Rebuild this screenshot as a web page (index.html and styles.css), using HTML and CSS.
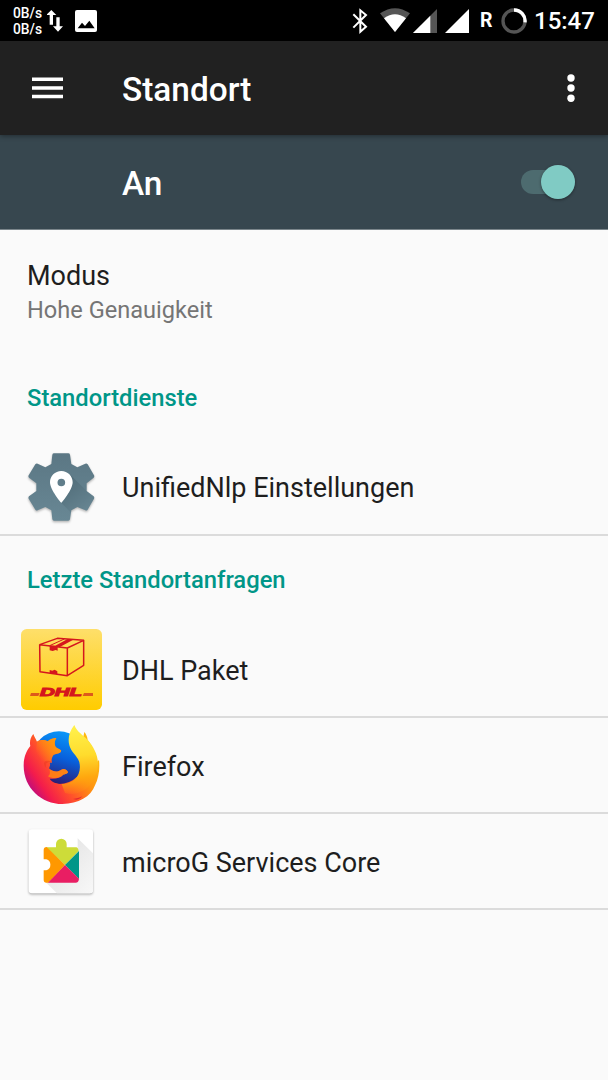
FILE: index.html
```html
<!DOCTYPE html>
<html lang="de">
<head>
    <meta charset="UTF-8">
    <meta name="viewport" content="width=device-width, initial-scale=1.0">
    <title>Standort</title>
    <link rel="stylesheet" href="styles.css">
</head>
<body>

    <!-- Statusleiste -->
    <div class="statusbar">
        <div class="speed">
            <span>0B/s</span>
            <span>0B/s</span>
        </div>
        <svg class="arrows" width="16" height="22" viewBox="0 0 48 66">
            <path fill="#fff" d="M13 0 28 15H18V44H8V15H-2zM33 65 18 49H28V22H38V49H48z"/>
        </svg>
        <svg class="picture" width="22" height="22" viewBox="0 0 66 66">
            <rect width="66" height="66" rx="6" fill="#fff"/>
            <path d="M8 55 21 38 30 48 43 32 59 55z"/>
        </svg>
        <div class="status-right">
            <svg class="bluetooth" width="16" height="26" viewBox="0 0 48 78">
                <path fill="none" stroke="#fff" stroke-width="6" d="M4 19 42 56 25 71V7L42 21 4 59"/>
            </svg>
            <svg class="wifi" width="30" height="25" viewBox="0 0 90 75">
                <path fill="#555" d="M0 16Q45-15 90 16L45 72z"/>
                <path fill="#fff" d="M12 31Q45 6 78 31L45 72z"/>
            </svg>
            <svg class="signal" width="24" height="24" viewBox="0 0 72 72">
                <path fill="#555" d="M72 0V72H0z"/>
                <path fill="#fff" d="M52 20V72H0z"/>
            </svg>
            <svg class="signal-full" width="24" height="24" viewBox="0 0 72 72">
                <path fill="#fff" d="M72 0V72H0z"/>
            </svg>
            <span class="roaming">R</span>
            <svg class="battery" width="26" height="26" viewBox="0 0 78 78">
                <circle cx="39" cy="39" r="33" fill="none" stroke="#555" stroke-width="10"/>
                <path fill="none" stroke="#fff" stroke-width="10" d="M39 6A33 33 0 0 1 72 43"/>
            </svg>
            <span class="clock">15:47</span>
        </div>
    </div>

    <!-- Titelleiste -->
    <div class="toolbar">
        <svg class="menu" width="31" height="22" viewBox="0 0 31 22">
            <path fill="#fff" d="M0 .5H31V4H0zM0 9.2H31V12.7H0zM0 17.8H31V21.3H0z"/>
        </svg>
        <h1>Standort</h1>
        <svg class="more" width="8" height="28" viewBox="0 0 8 28">
            <circle cx="4" cy="4" r="3.7" fill="#fff"/>
            <circle cx="4" cy="14" r="3.7" fill="#fff"/>
            <circle cx="4" cy="24.3" r="3.7" fill="#fff"/>
        </svg>
    </div>

    <!-- Schalter -->
    <div class="switchbar">
        <span>An</span>
        <div class="switch"><div class="thumb"></div></div>
    </div>

    <!-- Einstellungen -->
    <div class="mode">
        <div class="mode-title">Modus</div>
        <div class="mode-value">Hohe Genauigkeit</div>
    </div>

    <h2>Standortdienste</h2>

    <div class="row service">
        <svg class="app-icon" viewBox="0 0 285 288">
            <defs>
                <linearGradient id="gear" x1="0" y1="0" x2="0" y2="1">
                    <stop offset="0" stop-color="#5b7784"/>
                    <stop offset="1" stop-color="#688794"/>
                </linearGradient>
                <linearGradient id="gear-shade" gradientUnits="userSpaceOnUse" x1="150" y1="130" x2="220" y2="200">
                    <stop offset="0" stop-color="#4d6975" stop-opacity=".7"/>
                    <stop offset="1" stop-color="#4d6975" stop-opacity="0"/>
                </linearGradient>
                <clipPath id="gear-clip">
                    <path d="M117 40H160Q164 40 165 44L169 72 187 82 211 71Q215 69 218 73L237 106Q239 110 236 113L215 130V153L236 169Q239 172 237 176L218 209Q215 213 211 211L187 201 169 211 165 238Q164 242 160 242H117Q113 242 112 238L109 211 91 201 68 211Q64 213 61 209L41 176Q39 172 42 169L64 153V130L42 113Q39 110 41 106L61 73Q64 69 68 71L91 82 109 72 112 44Q113 40 117 40z"/>
                </clipPath>
            </defs>
            <path class="shadow" fill="url(#gear)" d="M117 40H160Q164 40 165 44L169 72 187 82 211 71Q215 69 218 73L237 106Q239 110 236 113L215 130V153L236 169Q239 172 237 176L218 209Q215 213 211 211L187 201 169 211 165 238Q164 242 160 242H117Q113 242 112 238L109 211 91 201 68 211Q64 213 61 209L41 176Q39 172 42 169L64 153V130L42 113Q39 110 41 106L61 73Q64 69 68 71L91 82 109 72 112 44Q113 40 117 40z"/>
            <path clip-path="url(#gear-clip)" fill="url(#gear-shade)" d="M166 104 260 198V288H238L139 189z"/>
            <path fill="#fff" fill-rule="evenodd" d="M139 93C120 93 105 108 105 127 105 150 139 189 139 189S173 150 173 127C173 108 158 93 139 93zM139 116A11.500 11.500 0 1 1 139 139 11.500 11.500 0 1 1 139 116z"/>
        </svg>
        <span>UnifiedNlp Einstellungen</span>
    </div>

    <h2>Letzte Standortanfragen</h2>

    <div class="row">
        <svg class="app-icon" viewBox="0 6 285 288">
            <defs>
                <linearGradient id="dhl" x1="0" y1="0" x2="0" y2="1">
                    <stop offset="0" stop-color="#fedf6a"/>
                    <stop offset="1" stop-color="#fc0"/>
                </linearGradient>
            </defs>
            <rect x="18" y="27" width="243" height="243" rx="17" fill="url(#dhl)"/>
            <g fill="none" stroke="#d5161d" stroke-width="4.500" stroke-linejoin="round">
                <path d="M74 74 157 84V167L75 155zM157 84 206 61V136L157 167M74 74 127 55 206 61"/>
            </g>
            <path fill="#d5161d" d="M118 79 158 57 175 59 133 82zM104 77H128V92L122 90 113 93 104 91zM104 150 112 152 119 149 127 154V163L104 159z"/>
            <path fill="none" stroke="#d5161d" stroke-width="3" d="M104 77 148 57"/>
            <path fill="#dd5a1b" d="M48 219H74L70 228H45zM207 219H234V228H203z"/>
            <text class="dhl-text" x="75" y="227" textLength="126" lengthAdjust="spacingAndGlyphs">DHL</text>
        </svg>
        <span>DHL Paket</span>
    </div>

    <div class="row">
        <svg class="app-icon" viewBox="0 0 285 288">
            <defs>
                <linearGradient id="fox" gradientUnits="userSpaceOnUse" x1="215" y1="80" x2="40" y2="200">
                    <stop offset="0" stop-color="#ffb80f"/>
                    <stop offset=".3" stop-color="#ff9210"/>
                    <stop offset=".62" stop-color="#ff4a2e"/>
                    <stop offset=".85" stop-color="#f31c4c"/>
                    <stop offset="1" stop-color="#c50e78"/>
                </linearGradient>
                <linearGradient id="globe" x1=".7" y1="0" x2=".4" y2="1">
                    <stop offset="0" stop-color="#0a9bfa"/>
                    <stop offset=".5" stop-color="#0860dc"/>
                    <stop offset="1" stop-color="#30196f"/>
                </linearGradient>
                <linearGradient id="tail" gradientUnits="userSpaceOnUse" x1="185" y1="30" x2="205" y2="235">
                    <stop offset="0" stop-color="#fff04a"/>
                    <stop offset=".4" stop-color="#ffdc2d"/>
                    <stop offset=".72" stop-color="#ffa80f"/>
                    <stop offset="1" stop-color="#ff8c12" stop-opacity="0"/>
                </linearGradient>
                <linearGradient id="snout" gradientUnits="userSpaceOnUse" x1="130" y1="75" x2="70" y2="115">
                    <stop offset="0" stop-color="#ff980e"/>
                    <stop offset="1" stop-color="#ff980e" stop-opacity="0"/>
                </linearGradient>
            </defs>
            <path fill="url(#fox)" d="M55 48C46 58 43 72 46 84 32 100 26 122 26 143 26 210 80 258 142 258 190 258 228 236 240 202 251 180 255 152 252 126L246 132C243 102 228 80 218 66 217 56 213 48 208 42L200 80 140 60 66 71C62 62 58 56 55 48z"/>
            <circle cx="132" cy="119" r="79" fill="url(#globe)"/>
            <path fill="url(#fox)" d="M66 71C78 64 90 66 98 70 106 63 116 60 124 60 119 68 117 78 122 87 127 92 134 93 138 97 140 103 133 106 116 110 110 116 109 124 111 134L104 134C108 142 102 146 103 152 115 162 128 163 139 155 148 150 157 157 159 163 155 170 148 168 144 171 136 180 122 184 104 182 110 192 125 198 142 198L130 225 80 215 40 180 34 120z"/>
            <path fill="url(#snout)" d="M66 71C78 64 90 66 98 70 106 63 116 60 124 60 119 68 117 78 122 87 127 92 134 93 138 97 140 103 133 106 116 110L104 134 60 120z"/>
            <path fill="#ff8a10" opacity=".8" d="M103 152C115 162 128 163 139 155 148 150 157 157 159 163 155 170 148 168 144 171 132 182 112 183 98 174 106 172 106 162 103 152z"/>
            <path fill="#e93a22" opacity=".5" d="M111 131C94 130 90 138 94 150 80 136 88 122 111 131z"/>
            <path fill="url(#tail)" d="M178 21C162 42 158 62 163 82 168 102 185 112 192 130 199 150 192 172 180 184 168 195 152 199 140 198L150 225C205 240 250 190 249 135 248 108 234 84 218 66 203 50 186 42 178 21z"/>
            <path fill="#e5272f" d="M174 243C184 242 194 240 202 235 197 241 192 244 184 245z"/>
        </svg>
        <span>Firefox</span>
    </div>

    <div class="row">
        <svg class="app-icon" viewBox="0 -3 285 288">
            <defs>
                <linearGradient id="long-shadow" x1="0" y1="0" x2="1" y2="1">
                    <stop offset=".3" stop-color="#e6e6e6"/>
                    <stop offset="1" stop-color="#f8f8f8"/>
                </linearGradient>
            </defs>
            <rect class="shadow" x="41" y="43" width="193" height="192" rx="10" fill="#fff"/>
            <path fill="url(#long-shadow)" d="M188 70 234 115V226Q234 235 224 235H126L89 199 188 100z"/>
            <path fill="#cddc39" d="M93 97H123V87A16 16 0 0 1 155 87V97H184Q189 97 191 108L150 150z"/>
            <path fill="#ff9800" d="M95 96 150 150 100 203H94Q86 203 86 194V166H94A16 17 0 0 0 94 133H86V105Q86 96 95 96z"/>
            <path fill="#009688" d="M192 108V192L150 150z"/>
            <path fill="#e91e63" d="M150 150 192 191Q191 203 182 203H99z"/>
        </svg>
        <span>microG Services Core</span>
    </div>

</body>
</html>
```

FILE: styles.css
```css
* {
    box-sizing: border-box;
}

body {
    margin: 0;
    min-height: 100vh;
    background-color: #fafafa;
    color: #1e1e1e;
    font-family: Roboto, sans-serif;
    font-size: 27px;
}

svg {
    display: block;
    flex-shrink: 0;
}

h1, h2 {
    margin: 0;
    font-weight: 500;
}

/* Statusleiste */
.statusbar {
    display: flex;
    align-items: center;
    height: 41px;
    padding: 0 14px 0 13px;
    background-color: #000;
    color: #fff;
}

.speed {
    display: flex;
    flex-direction: column;
    width: 34px;
    font-size: 13.8px;
    font-weight: 500;
    line-height: 16px;
}

.picture {
    margin-left: 12px;
}

.status-right {
    display: flex;
    align-items: center;
    margin-left: auto;
}

.wifi {
    margin-left: 12px;
}

.signal {
    margin-left: 3px;
}

.signal-full {
    margin-left: 8px;
}

.roaming {
    width: 13px;
    margin-left: 11px;
    font-size: 19.5px;
    font-weight: 700;
}

.battery {
    margin-left: 8px;
}

.clock {
    width: 60px;
    margin-left: 7px;
    font-size: 24px;
    font-weight: 500;
}

/* Titelleiste */
.toolbar {
    position: relative;
    display: flex;
    align-items: center;
    height: 94px;
    padding: 0 33px 0 32px;
    background-color: #212121;
    box-shadow: 0 1px 5px rgba(0, 0, 0, 0.4);
    color: #fff;
}

.toolbar h1 {
    margin-left: 59px;
    padding-top: 2px;
    font-size: 33.4px;
}

.more {
    margin-left: auto;
}

/* Schalter */
.switchbar {
    display: flex;
    align-items: center;
    justify-content: space-between;
    height: 95px;
    padding: 0 33px 0 122px;
    border-bottom: 1px solid #7b868b;
    background-color: #37474f;
    color: #fff;
    font-size: 33.4px;
    font-weight: 500;
}

.switchbar span {
    padding-top: 3px;
}

.switch {
    display: flex;
    align-items: center;
    justify-content: flex-end;
    width: 54px;
    height: 24px;
    border-radius: 12px;
    background-color: #4d6b6f;
}

.thumb {
    width: 34px;
    height: 34px;
    border-radius: 50%;
    background-color: #80cbc4;
    box-shadow: 0 1px 3px rgba(0, 0, 0, 0.4);
}

/* Modus */
.mode {
    height: 124px;
    padding: 30px 27px 0;
}

.mode-title {
    line-height: 32px;
}

.mode-value {
    padding-top: 4px;
    color: #757575;
    font-size: 23.6px;
    line-height: 28px;
}

h2 {
    height: 86px;
    padding-left: 27px;
    color: #009688;
    font-size: 23.75px;
    line-height: 88px;
}

/* Listeneinträge */
.row {
    display: flex;
    align-items: center;
    gap: 12px;
    height: 96px;
    padding-left: 15px;
    border-bottom: 2px solid #dbdbdb;
}

.row span {
    padding-top: 3px;
}

.service span {
    padding-top: 1px;
}

.app-icon {
    width: 95px;
    height: 96px;
    align-self: flex-start;
}

.shadow {
    filter: drop-shadow(0 4px 3px rgba(0, 0, 0, 0.3));
}

.dhl-text {
    fill: #d5161d;
    stroke: #d5161d;
    stroke-width: 3px;
    font-family: "Liberation Sans", sans-serif;
    font-size: 33px;
    font-style: italic;
    font-weight: 700;
}
```
